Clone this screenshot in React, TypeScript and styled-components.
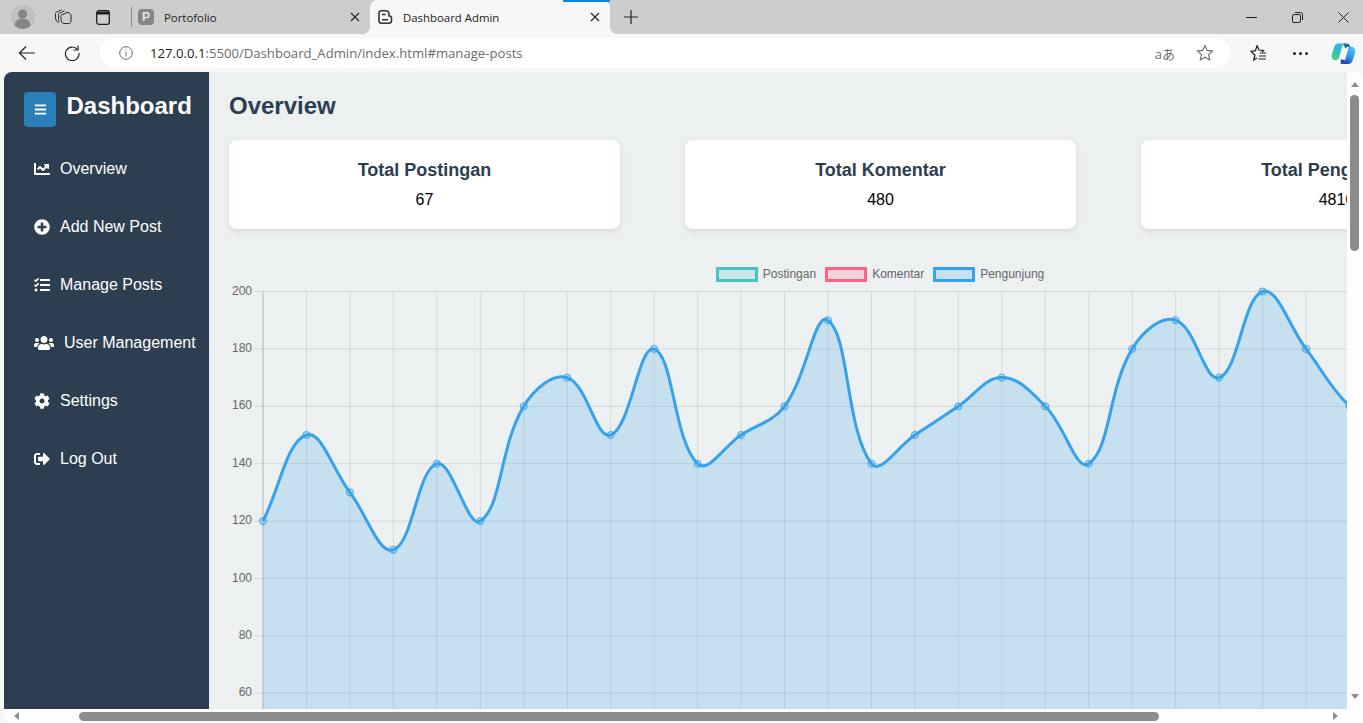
import styled, { createGlobalStyle } from 'styled-components';
import {
  FaBars,
  FaChartLine,
  FaPlusCircle,
  FaTasks,
  FaUsers,
  FaCog,
  FaSignOutAlt,
} from 'react-icons/fa';

const GlobalStyle = createGlobalStyle`
  html, body {
    margin: 0;
    padding: 0;
    width: 100%;
    height: 100%;
    overflow: hidden;
    background: #f7f7f7;
  }
  * {
    box-sizing: border-box;
  }
`;

const menuItems = [
  { label: 'Overview', icon: <FaChartLine />, wide: false },
  { label: 'Add New Post', icon: <FaPlusCircle />, wide: false },
  { label: 'Manage Posts', icon: <FaTasks />, wide: false },
  { label: 'User Management', icon: <FaUsers />, wide: true },
  { label: 'Settings', icon: <FaCog />, wide: false },
  { label: 'Log Out', icon: <FaSignOutAlt />, wide: false },
];

const cards = [
  { title: 'Total Postingan', value: '67' },
  { title: 'Total Komentar', value: '480' },
  { title: 'Total Pengunjung', value: '4810' },
];

const legend = [
  { label: 'Postingan', line: '#4bc0c0', fill: 'rgba(75,192,192,0.2)' },
  { label: 'Komentar', line: '#ff6384', fill: 'rgba(255,99,132,0.2)' },
  { label: 'Pengunjung', line: '#36a2eb', fill: 'rgba(54,162,235,0.2)' },
];

const visitors = [
  120, 150, 130, 110, 140, 120, 160, 170, 150, 180, 140, 150, 160, 190, 140, 150, 160, 170, 160,
  140, 180, 190, 170, 200, 180, 160, 150,
];

// plot geometry inside the svg
const plotLeft = 54;
const stepX = 43.46;
const plotTop = 6.5;
const unitY = 2.87;
const yTicks = [200, 180, 160, 140, 120, 100, 80, 60];

const points = visitors.map((v, i) => ({
  x: plotLeft + i * stepX,
  y: plotTop + (200 - v) * unitY,
}));

// same spline as chart.js with tension 0.4
function curvePath() {
  const t = 0.4;
  const ctrl = points.map((p, i) => {
    const prev = points[i - 1] ?? p;
    const next = points[i + 1] ?? p;
    const d01 = Math.hypot(p.x - prev.x, p.y - prev.y);
    const d12 = Math.hypot(next.x - p.x, next.y - p.y);
    const s01 = d01 / (d01 + d12 || 1);
    const s12 = d12 / (d01 + d12 || 1);
    return {
      inX: p.x - t * s01 * (next.x - prev.x),
      inY: p.y - t * s01 * (next.y - prev.y),
      outX: p.x + t * s12 * (next.x - prev.x),
      outY: p.y + t * s12 * (next.y - prev.y),
    };
  });
  let d = `M${points[0].x} ${points[0].y}`;
  for (let i = 1; i < points.length; i++) {
    d += ` C${ctrl[i - 1].outX} ${ctrl[i - 1].outY} ${ctrl[i].inX} ${ctrl[i].inY} ${points[i].x} ${points[i].y}`;
  }
  return d;
}

function VisitorChart() {
  const line = curvePath();
  const bottom = plotTop + 200 * unitY;
  const last = points[points.length - 1];
  return (
    <ChartSvg width="1342" height="426" viewBox="0 0 1342 426">
      {yTicks.map((v) => {
        const y = plotTop + (200 - v) * unitY;
        return (
          <g key={v}>
            <line x1={plotLeft - 8} x2="1342" y1={y} y2={y} stroke="rgba(0,0,0,0.1)" />
            <text x={plotLeft - 11} y={y + 3} textAnchor="end" fontSize="12" fill="#666" fontFamily="'Liberation Sans', Arial, sans-serif">
              {v}
            </text>
          </g>
        );
      })}
      {points.map((p, i) => (
        <line key={i} x1={p.x} x2={p.x} y1={plotTop} y2={bottom} stroke={i === 0 ? 'rgba(0,0,0,0.25)' : 'rgba(0,0,0,0.1)'} />
      ))}
      <path d={`${line} L${last.x} ${bottom} L${plotLeft} ${bottom} Z`} fill="rgba(54,162,235,0.2)" />
      <path d={line} fill="none" stroke="#36a2eb" strokeWidth="3" />
      {points.map((p, i) => (
        <circle key={i} cx={p.x} cy={p.y} r="3.5" fill="rgba(54,162,235,0.2)" stroke="#36a2eb" />
      ))}
    </ChartSvg>
  );
}

function CopilotLogo() {
  return (
    <svg width="25" height="23" viewBox="0 0 24 22">
      <defs>
        <linearGradient id="copA" x1="0.6" y1="0" x2="0.3" y2="1">
          <stop offset="0" stopColor="#2fb4e6" />
          <stop offset="0.55" stopColor="#2fc6b0" />
          <stop offset="1" stopColor="#4fd08a" />
        </linearGradient>
        <linearGradient id="copB" x1="0.7" y1="0" x2="0.3" y2="1">
          <stop offset="0" stopColor="#4cc4f4" />
          <stop offset="0.6" stopColor="#2f8fe8" />
          <stop offset="1" stopColor="#1c3fc4" />
        </linearGradient>
      </defs>
      <path d="M7 1.500H14C12 1.500 11 3 10.500 5L8 14C7.500 16 6.500 17.500 5 17.500H4.500C1.500 17.500 0 15 .8 12L3 5C3.700 2.800 5 1.500 7 1.500Z" fill="url(#copA)" />
      <path d="M18.500 4.500H19.500C22 4.500 24 7 23.200 10L21 17C20.300 19.300 19 21 17 21H10C12 21 13 19.500 13.500 17.500L16 8C16.500 6 17.200 4.500 18.500 4.500Z" fill="url(#copB)" />
      <path d="M12 1.500H15C17 1.500 18 2.800 18.500 4.500L19 6.500C18.500 5.300 17.500 4.500 16.500 4.500 15.500 4.500 14.500 5 14 6.500L12 2.500Z" fill="#0f6f9e" />
      <path d="M9 16.500L13.500 17.500C13 19.500 12 21 10 21H9C10 20 9.500 18 9 16.500Z" fill="#1a3fb0" />
    </svg>
  );
}

function CloseGlyph() {
  return (
    <svg width="10" height="10" viewBox="0 0 10 10" stroke="#222" strokeWidth="1.100">
      <path d="M1 1l8 8M9 1l-8 8" />
    </svg>
  );
}

export default function App() {
  return (
    <>
      <GlobalStyle />
      <Browser>
        <TabStrip>
          <StripButton>
            <Avatar>
              <svg width="24" height="24" viewBox="0 0 24 24">
                <circle cx="12" cy="12" r="12" fill="#c0c0c0" />
                <circle cx="11.500" cy="9" r="4.500" fill="#858585" />
                <path d="M3.500 21c0-5 4-7.500 8-7.500s8 2.500 8 7.500c-2 2-5 3-8 3s-6-1-8-3z" fill="#858585" />
              </svg>
            </Avatar>
          </StripButton>
          <StripButton>
            <svg width="18" height="16" viewBox="0 0 18 16" fill="none" stroke="#2b2b2b" strokeWidth="1">
              <path d="M7.500 6l5.500-2.500c.8-.3 1.300-.2 2 .3l1.500 1.200c.4.300.5.700.5 1.200v6c0 1.200-.7 2.300-2.300 2.300h-4.700c-1 0-1.600-.4-2-1.300l-1-2.600c-.1-.3-.1-.6-.1-1V7.200c0-.6.200-1 .6-1.200z" />
              <path d="M4.500 10.500V5.500c0-.6.200-1 .8-1.300L10.500 1.800" />
              <path d="M1.500 9V4.500c0-.6.300-1 .8-1.300L7.500.8" />
              <path d="M1.500 9c0 1 .8 3 3 5M4.500 10.500c.2 1 .6 1.800 1 2.500" />
            </svg>
          </StripButton>
          <StripButton>
            <svg width="14" height="15" viewBox="0 0 14 15" fill="none" stroke="#1f1f1f" strokeWidth="1.300">
              <rect x="0.700" y="0.700" width="12.600" height="13.600" rx="2.200" />
              <path d="M1 3h12" strokeWidth="3" />
            </svg>
          </StripButton>
          <TabDivider />
          <Tab>
            <Favicon>P</Favicon>
            <TabTitle>Portofolio</TabTitle>
            <TabClose>
              <CloseGlyph />
            </TabClose>
          </Tab>
          <Tab $active>
            <svg width="16" height="14" viewBox="0 0 16 14" fill="none" stroke="#333" strokeWidth="1.600">
              <path d="M2 7V3c0-1.300.8-2.200 2-2.200h4.500C10.500.8 12 2.300 12 4.500V6h.5c1.300 0 2 .8 2 2v2.500c0 1.600-1 2.700-2.700 2.700H4.500C3 13.200 2 12 2 10.500z" />
              <path d="M5 4.500h3.500M5 9.800h6" />
            </svg>
            <TabTitle $active>Dashboard Admin</TabTitle>
            <TabClose>
              <CloseGlyph />
            </TabClose>
            <LoadBar />
          </Tab>
          <NewTab>
            <svg width="14" height="14" viewBox="0 0 14 14" stroke="#222" strokeWidth="1.200">
              <path d="M7 0v14M0 7h14" />
            </svg>
          </NewTab>
          <WindowControls>
            <WindowButton>
              <svg width="11" height="11" viewBox="0 0 11 11" stroke="#222">
                <path d="M0 5.500h11" />
              </svg>
            </WindowButton>
            <WindowButton>
              <svg width="11" height="11" viewBox="0 0 11 11" fill="none" stroke="#222">
                <rect x="0.500" y="2.500" width="8" height="8" rx="1.500" />
                <path d="M3 .500h5.500a2 2 0 0 1 2 2V8" />
              </svg>
            </WindowButton>
            <WindowButton>
              <svg width="11" height="11" viewBox="0 0 11 11" stroke="#222">
                <path d="M.500 .500l10 10M10.500 .500l-10 10" />
              </svg>
            </WindowButton>
          </WindowControls>
        </TabStrip>

        <Toolbar>
          <NavButton>
            <svg width="18" height="16" viewBox="0 0 18 16" fill="none" stroke="#222" strokeWidth="1.200">
              <path d="M17 8H1.500M8 1.500L1.500 8 8 14.500" />
            </svg>
          </NavButton>
          <NavButton>
            <svg width="16" height="16" viewBox="0 0 16 16" fill="none" stroke="#222" strokeWidth="1.200">
              <path d="M13.500 4.500A6.800 6.800 0 1 0 15 8" />
              <path d="M14 .500v4.500H9.500" />
            </svg>
          </NavButton>
          <AddressBar>
            <svg width="14" height="14" viewBox="0 0 14 14" fill="none" stroke="#6b6b6b">
              <circle cx="7" cy="7" r="6.300" />
              <path d="M7 6v4.500M7 3.500v1.200" />
            </svg>
            <Url>
              <UrlHost>127.0.0.1</UrlHost>:5500/Dashboard_Admin/index.html#manage-posts
            </Url>
            <Translate>aあ</Translate>
            <svg width="18" height="18" viewBox="0 0 18 18" fill="none" stroke="#6b6b6b" strokeWidth="1.100">
              <path d="M9 1.500l2.300 4.900 5.200.6-3.900 3.600 1.100 5.300L9 13.200l-4.700 2.700 1.100-5.300L1.500 7l5.200-.6z" />
            </svg>
          </AddressBar>
          <ToolIcons>
            <svg width="18" height="18" viewBox="0 0 18 18" fill="none" stroke="#222" strokeWidth="1.200">
              <path d="M8 1.500l2 4.500 4.500.5-1.500 1.500M6 11l-1.200 5L8 14M4.800 16l1-5-3.800-3.500 4.500-.8L8 1.500" />
              <path d="M11 9h6M10 12h7M9.500 15h7.500" />
            </svg>
            <Dots>
              <Dot />
              <Dot />
              <Dot />
            </Dots>
            <CopilotLogo />
          </ToolIcons>
        </Toolbar>

        <Viewport>
          <PageColumn>
            <Page>
              <Sidebar>
                <SidebarHeader>
                  <Toggle>
                    <FaBars />
                  </Toggle>
                  <Brand>Dashboard</Brand>
                </SidebarHeader>
                <Menu>
                  {menuItems.map((item) => (
                    <MenuItem key={item.label}>
                      <MenuIcon $wide={item.wide}>{item.icon}</MenuIcon>
                      {item.label}
                    </MenuItem>
                  ))}
                </Menu>
              </Sidebar>
              <Main>
                <PageTitle>Overview</PageTitle>
                <CardRow>
                  {cards.map((c) => (
                    <Card key={c.title}>
                      <CardTitle>{c.title}</CardTitle>
                      <CardValue>{c.value}</CardValue>
                    </Card>
                  ))}
                </CardRow>
                <Legend>
                  {legend.map((l) => (
                    <LegendItem key={l.label}>
                      <LegendBox $line={l.line} $fill={l.fill} />
                      {l.label}
                    </LegendItem>
                  ))}
                </Legend>
                <VisitorChart />
              </Main>
            </Page>
            <HScroll>
              <Arrow $dir="left" />
              <HTrack>
                <HThumb />
              </HTrack>
              <Arrow $dir="right" />
            </HScroll>
          </PageColumn>
          <VScroll>
            <Arrow $dir="up" />
            <VTrack>
              <VThumb />
            </VTrack>
            <Arrow $dir="down" />
          </VScroll>
        </Viewport>
      </Browser>
    </>
  );
}

const Browser = styled.div`
  width: 1363px;
  height: 723px;
  display: flex;
  flex-direction: column;
  background: #f7f7f7;
  overflow: hidden;
`;

const TabStrip = styled.div`
  height: 34px;
  flex: none;
  display: flex;
  align-items: center;
  background: #cdcdcd;
  padding-left: 5px;
`;

const StripButton = styled.div`
  width: 35px;
  height: 34px;
  margin-right: 5px;
  display: flex;
  align-items: center;
  justify-content: center;
`;

const Avatar = styled.div`
  width: 24px;
  height: 24px;
  border-radius: 50%;
  overflow: hidden;
`;

const TabDivider = styled.div`
  width: 1px;
  height: 20px;
  background: #8a8a8a;
  margin: 0 6px;
`;

const Tab = styled.div<{ $active?: boolean }>`
  position: relative;
  width: ${(p) => (p.$active ? '240px' : '232px')};
  height: 34px;
  display: flex;
  align-items: center;
  padding-left: ${(p) => (p.$active ? '7px' : '0')};
  background: ${(p) => (p.$active ? '#f7f7f7' : 'transparent')};
  border-radius: ${(p) => (p.$active ? '8px 8px 0 0' : '0')};

  ${(p) =>
    p.$active &&
    `
    &::before, &::after {
      content: '';
      position: absolute;
      bottom: 0;
      width: 8px;
      height: 8px;
    }
    &::before {
      left: -8px;
      background: radial-gradient(circle at 0 0, transparent 8px, #f7f7f7 8.5px);
    }
    &::after {
      right: -8px;
      background: radial-gradient(circle at 100% 0, transparent 8px, #f7f7f7 8.5px);
    }
  `}
`;

const Favicon = styled.div`
  width: 16px;
  height: 16px;
  border-radius: 4px;
  background: #858585;
  color: #e4e4e4;
  font: bold 12px/16px 'Liberation Sans', Arial, sans-serif;
  text-align: center;
`;

const TabTitle = styled.span<{ $active?: boolean }>`
  margin-left: 10px;
  font: 11.4px 'Open Sans', 'Liberation Sans', sans-serif;
  color: #222;
`;

const TabClose = styled.div`
  position: absolute;
  right: 10px;
  top: 12px;
  display: flex;
`;

const LoadBar = styled.div`
  position: absolute;
  top: 0;
  left: 193px;
  width: 47px;
  height: 2px;
  background: #0a84e0;
`;

const NewTab = styled.div`
  width: 40px;
  height: 34px;
  margin-left: 1px;
  display: flex;
  align-items: center;
  justify-content: center;
`;

const WindowControls = styled.div`
  margin-left: auto;
  display: flex;
  margin-right: -3px;
`;

const WindowButton = styled.div`
  width: 46px;
  height: 34px;
  display: flex;
  align-items: center;
  justify-content: center;
`;

const Toolbar = styled.div`
  height: 38px;
  flex: none;
  display: flex;
  align-items: center;
  padding-left: 9px;
  background: #f7f7f7;
`;

const NavButton = styled.div`
  width: 36px;
  height: 30px;
  flex: none;
  margin-right: 9px;
  display: flex;
  align-items: center;
  justify-content: center;
`;

const AddressBar = styled.div`
  width: 1130px;
  height: 30px;
  margin-left: 1px;
  flex: none;
  display: flex;
  align-items: center;
  padding: 0 16px 0 19px;
  background: #fff;
  border-radius: 15px;
`;

const Url = styled.span`
  margin-left: 17px;
  font: 13.15px 'Open Sans', 'Liberation Sans', sans-serif;
  color: #6b6b6b;
  flex: 1;
`;

const UrlHost = styled.span`
  color: #1a1a1a;
`;

const Translate = styled.span`
  margin-right: 21px;
  font: 13px 'Open Sans', 'Noto Sans CJK JP', sans-serif;
  color: #6b6b6b;
`;

const ToolIcons = styled.div`
  display: flex;
  flex: none;
  align-items: center;
  margin-left: 19px;
`;

const Dots = styled.div`
  display: flex;
  gap: 3px;
  margin: 0 23px 0 26px;
`;

const Dot = styled.span`
  width: 3px;
  height: 3px;
  border-radius: 50%;
  background: #222;
`;

const Viewport = styled.div`
  flex: 1;
  min-height: 0;
  display: flex;
  margin-left: 4px;
  background: #fdfdfd;
  border-radius: 8px 8px 0 8px;
  overflow: hidden;
`;

const PageColumn = styled.div`
  flex: 1;
  min-width: 0;
  display: flex;
  flex-direction: column;
`;

const Page = styled.div`
  flex: 1;
  min-height: 0;
  display: flex;
  overflow: hidden;
  background: #ecf0f1;
`;

const Sidebar = styled.aside`
  width: 205px;
  flex: none;
  background: #2c3e50;
  padding: 20px 0 0 20px;
  color: #fff;
  font-family: 'Liberation Sans', Arial, sans-serif;
`;

const SidebarHeader = styled.div`
  display: flex;
  align-items: flex-start;
`;

const Toggle = styled.div`
  width: 32px;
  height: 35px;
  background: #2980b9;
  border-radius: 4px;
  display: flex;
  align-items: center;
  justify-content: center;
  font-size: 13px;
`;

const Brand = styled.div`
  margin-left: 10.5px;
  font-size: 24px;
  font-weight: bold;
  line-height: 28px;
`;

const Menu = styled.nav`
  display: flex;
  flex-direction: column;
  margin-top: 13px;
`;

const MenuItem = styled.div`
  height: 58px;
  display: flex;
  align-items: center;
  padding-left: 10px;
  font-size: 16px;
`;

const MenuIcon = styled.span<{ $wide: boolean }>`
  width: ${(p) => (p.$wide ? '30px' : '26px')};
  flex: none;
  display: flex;

  svg {
    width: ${(p) => (p.$wide ? '20px' : '16px')};
    height: 16px;
  }
`;

const Main = styled.main`
  flex: 1;
  min-width: 0;
  padding: 20px 0 0 20px;
  font-family: 'Liberation Sans', Arial, sans-serif;
  overflow: hidden;
`;

const PageTitle = styled.h1`
  margin: 0;
  font-size: 24px;
  line-height: 28px;
  font-weight: bold;
  color: #2c3e50;
`;

const CardRow = styled.div`
  display: flex;
  gap: 65px;
  margin-top: 20px;
  width: 1303px;
`;

const Card = styled.div`
  width: 391px;
  height: 89px;
  flex: none;
  padding-top: 20px;
  background: #fff;
  border-radius: 8px;
  box-shadow: 0 2px 6px rgba(0, 0, 0, 0.1);
  text-align: center;
`;

const CardTitle = styled.div`
  font-size: 18px;
  line-height: 20px;
  font-weight: bold;
  color: #2c3e50;
`;

const CardValue = styled.div`
  margin-top: 10px;
  font-size: 16px;
  line-height: 20px;
  color: #000;
`;

const Legend = styled.div`
  display: flex;
  justify-content: center;
  gap: 9px;
  width: 1342px;
  margin: 35px 0 0 -20px;
  height: 20px;
  align-items: center;
`;

const LegendItem = styled.div`
  display: flex;
  align-items: center;
  gap: 5px;
  font-size: 12px;
  color: #666;
`;

const LegendBox = styled.span<{ $line: string; $fill: string }>`
  width: 42px;
  height: 15px;
  border: 3px solid ${(p) => p.$line};
  background: ${(p) => p.$fill};
`;

const ChartSvg = styled.svg`
  display: block;
  margin: 1px 0 0 -20px;
`;

const HScroll = styled.div`
  height: 14px;
  flex: none;
  display: flex;
  align-items: center;
  background: #fdfdfd;
`;

const HTrack = styled.div`
  flex: 1;
  height: 10px;
  padding-left: 54px;
  padding-right: 168px;
`;

const HThumb = styled.div`
  height: 9px;
  margin-top: 1px;
  background: #8c8c8c;
  border-radius: 5px;
`;

const VScroll = styled.div`
  width: 16px;
  flex: none;
  display: flex;
  flex-direction: column;
  align-items: center;
  background: #fdfdfd;
  padding: 10px 0 24px;
`;

const VTrack = styled.div`
  flex: 1;
  width: 100%;
  padding: 8px 3px 0 3px;
`;

const VThumb = styled.div`
  width: 9px;
  height: 156px;
  background: #8c8c8c;
  border-radius: 5px;
`;

const arrowShapes = {
  up: 'border-width: 0 4px 5px; border-color: transparent transparent #8c8c8c;',
  down: 'border-width: 5px 4px 0; border-color: #8c8c8c transparent transparent;',
  left: 'border-width: 4px 5px 4px 0; border-color: transparent #8c8c8c transparent transparent; margin: 0 6px 0 10px;',
  right: 'border-width: 4px 0 4px 5px; border-color: transparent transparent transparent #8c8c8c; margin: 0 9px 0 6px;',
};

const Arrow = styled.span<{ $dir: keyof typeof arrowShapes }>`
  width: 0;
  height: 0;
  flex: none;
  border-style: solid;
  ${(p) => arrowShapes[p.$dir]}
`;
